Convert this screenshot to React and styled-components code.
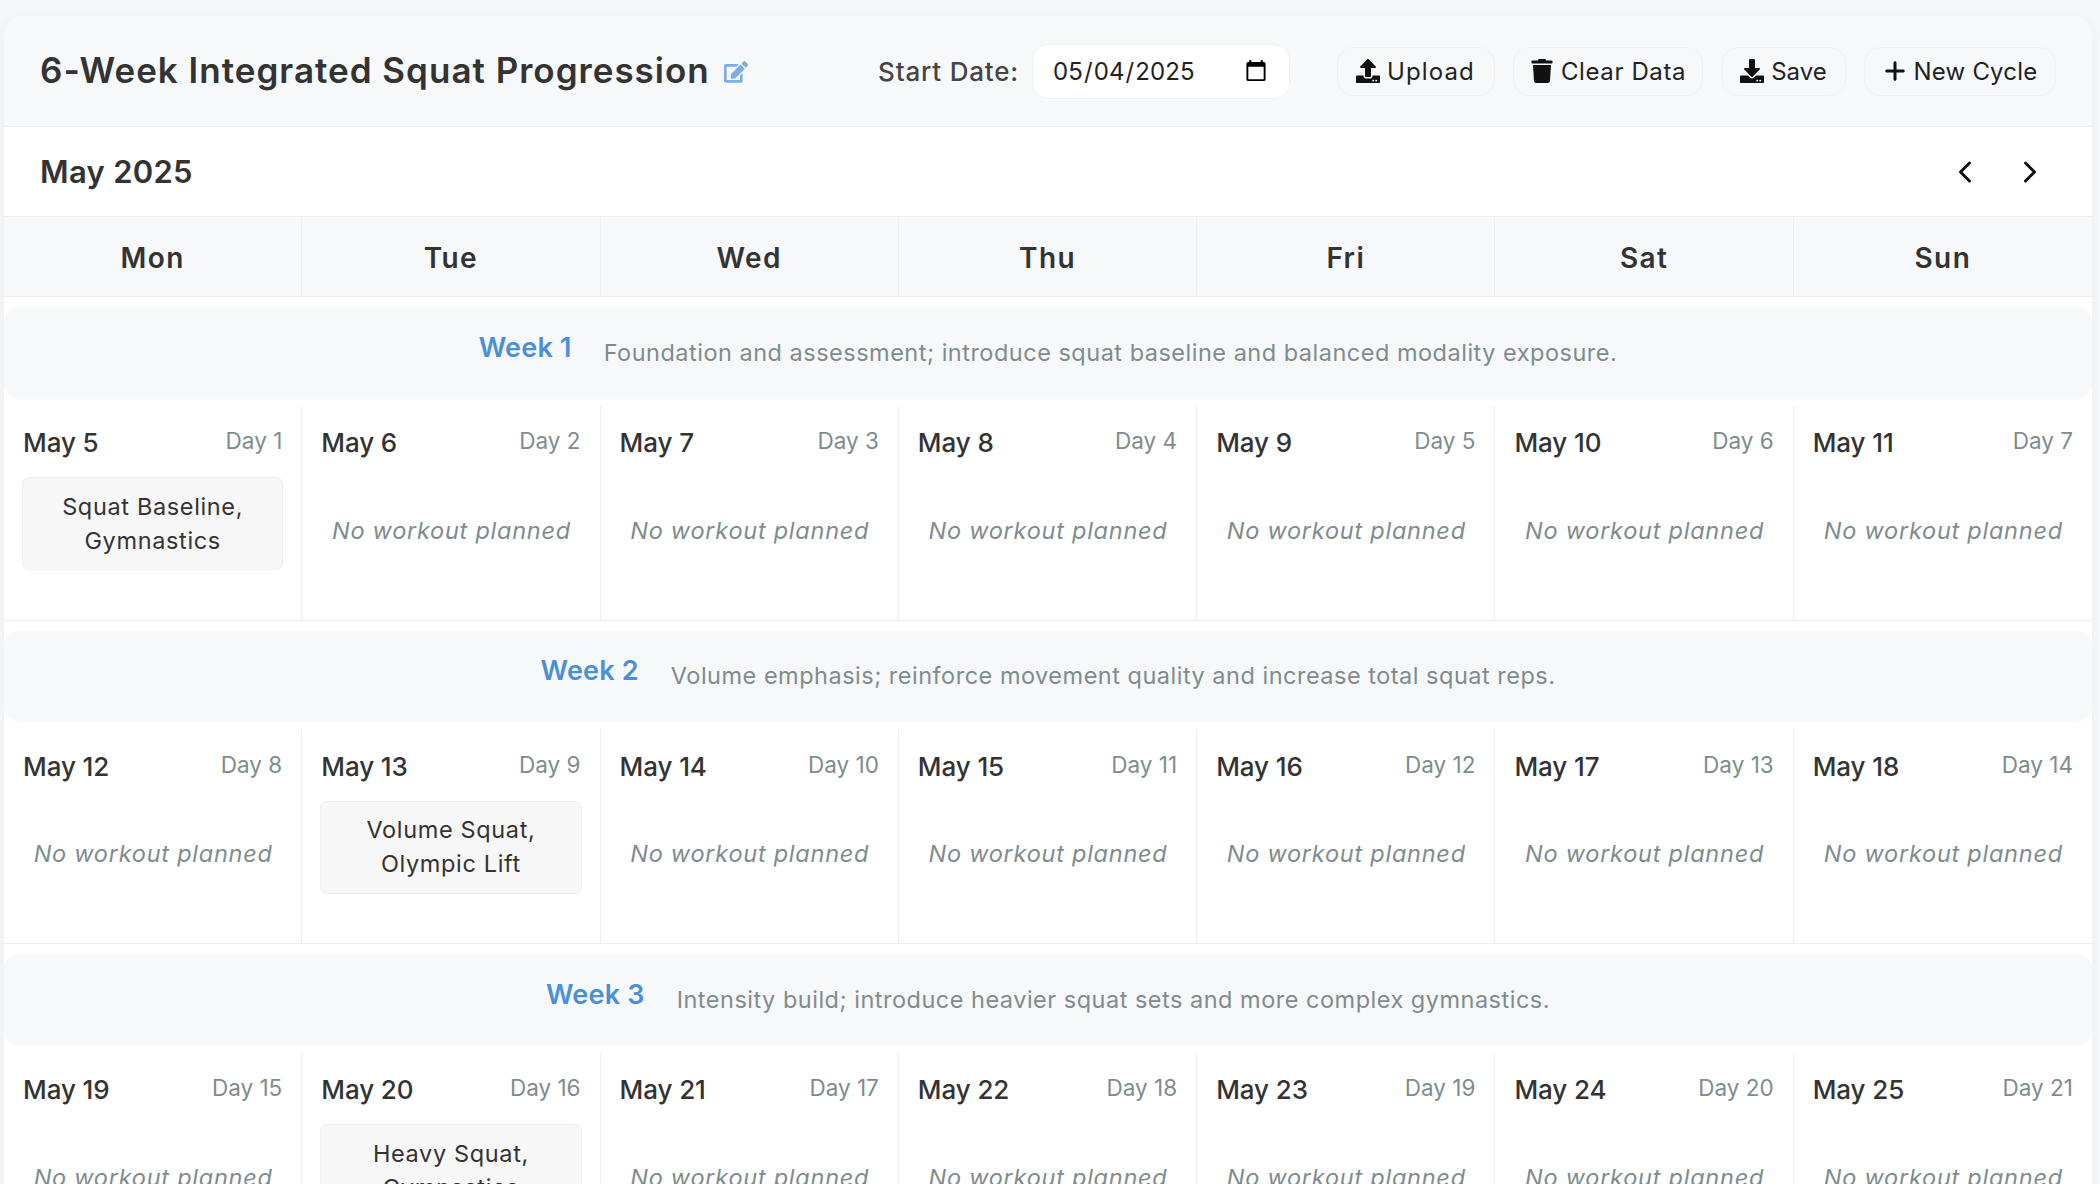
import React from 'react';
import styled, { createGlobalStyle } from 'styled-components';
import { FaEdit, FaUpload, FaTrash, FaDownload } from 'react-icons/fa';
import { FaPlus } from 'react-icons/fa6';
import { ChevronLeft, ChevronRight } from 'lucide-react';

const GlobalStyle = createGlobalStyle`
  html, body {
    margin: 0;
    height: 1184px;
    overflow: hidden;
    background: #f5f6f8;
    font-family: Inter, "Noto Sans", sans-serif;
    color: #333;
  }
  * { box-sizing: border-box; }
`;

const Page = styled.div`
  padding: 16px 8px 0 4px;
`;

const Card = styled.div`
  background: #fff;
  border-radius: 20px 20px 0 0;
  box-shadow: 0 2px 12px rgba(0, 0, 0, 0.04);
  overflow: hidden;
`;

const Header = styled.header`
  height: 111px;
  background: #f7f8fa;
  border-bottom: 1px solid #eceef0;
  display: flex;
  align-items: center;
  justify-content: space-between;
  padding: 0 36px;
`;

const TitleGroup = styled.div`
  display: flex;
  align-items: center;
  gap: 14px;
  margin-bottom: 2px;
`;

const Title = styled.h1`
  margin: 0;
  font-size: 35px;
  font-weight: 600;
  letter-spacing: 1px;
  color: #333;
`;

const EditIcon = styled(FaEdit)`
  width: 24px;
  height: 24px;
  color: #4a90d9;
  opacity: 0.7;
  margin-top: 4px;
`;

const Controls = styled.div`
  display: flex;
  align-items: center;
`;

const DateLabel = styled.label`
  font-size: 26px;
  font-weight: 500;
  letter-spacing: 0.8px;
  color: #444;
  margin-right: 13px;
`;

const DateInput = styled.input`
  width: 258px;
  height: 55px;
  padding: 0 19px;
  background: #fff;
  border: 1px solid #eef0f2;
  border-radius: 16px;
  font-family: inherit;
  font-size: 24px;
  letter-spacing: 0.1px;
  color: #222;
  margin-right: 46.5px;
  outline: none;
`;

const Actions = styled.div`
  display: flex;
  gap: 18.5px;
`;

const ActionButton = styled.button`
  width: ${(props) => props.$width}px;
  height: 49px;
  padding: 0;
  display: flex;
  align-items: center;
  justify-content: center;
  gap: 7px;
  background: #f7f8fa;
  border: 1px solid #eef0f2;
  border-radius: 16px;
  font-family: inherit;
  font-size: 24px;
  letter-spacing: ${(props) => props.$track}px;
  color: #222;
  svg { width: auto; height: 24px; color: #111; }
`;

const MonthBar = styled.div`
  height: 90px;
  border-bottom: 1px solid #eceef0;
  display: flex;
  align-items: center;
  justify-content: space-between;
  padding: 0 36px;
`;

const MonthName = styled.h2`
  margin: 0;
  font-size: 31px;
  font-weight: 600;
  letter-spacing: 0.3px;
  color: #333;
`;

const MonthNav = styled.div`
  display: flex;
  gap: 29px;
  margin-right: 8px;
`;

const NavButton = styled.button`
  width: 36px;
  height: 36px;
  padding: 0;
  background: none;
  border: none;
  color: #111;
  display: flex;
  svg { width: 36px; height: 36px; }
`;

const WeekdayRow = styled.div`
  height: 80px;
  display: grid;
  grid-template-columns: repeat(7, 1fr);
  background: #f7f8fa;
  border-bottom: 1px solid #eceef0;
`;

const Weekday = styled.div`
  display: flex;
  align-items: center;
  justify-content: center;
  padding-top: 2px;
  font-size: 28px;
  font-weight: 600;
  letter-spacing: 1.4px;
  color: #333;
  border-right: 1px solid #eceef0;
  &:last-child { border-right: none; }
`;

const WeekBand = styled.div`
  height: 90.5px;
  margin-top: 10px;
  background: #f7f8fa;
  border-radius: 16px;
  box-shadow: 0 1px 3px rgba(0, 0, 0, 0.03);
  display: flex;
  align-items: center;
  justify-content: center;
  gap: 32px;
`;

const WeekName = styled.span`
  font-size: 27px;
  font-weight: 600;
  letter-spacing: 0.2px;
  color: #4a90d9;
  margin-bottom: 10px;
`;

const WeekText = styled.span`
  font-size: 23.5px;
  letter-spacing: 0.5px;
  color: #7f8c8d;
`;

const DayGrid = styled.div`
  margin-top: 8px;
  display: grid;
  grid-template-columns: repeat(7, 1fr);
  border-bottom: 1px solid #eceef0;
`;

const DayCell = styled.div`
  height: 214px;
  padding: 18.5px 19px 0;
  border-right: 1px solid #eceef0;
  &:last-child { border-right: none; }
`;

const DayHead = styled.div`
  display: flex;
  justify-content: space-between;
  align-items: flex-start;
  height: 53px;
`;

const DateText = styled.span`
  font-size: 26px;
  font-weight: 500;
  letter-spacing: -0.1px;
  color: #333;
  line-height: 38px;
`;

const DayNumber = styled.span`
  font-size: 22.5px;
  color: #7f8c8d;
  line-height: 34px;
`;

const WorkoutBox = styled.div`
  height: 93px;
  margin: 0 -1px;
  background: #f7f7f7;
  border: 1px solid #eeeeee;
  border-radius: 7px;
  display: flex;
  align-items: center;
  justify-content: center;
  text-align: center;
  font-size: 23.5px;
  line-height: 34px;
  letter-spacing: 0.65px;
  color: #333;
`;

const EmptyText = styled.div`
  margin: 36.5px -10px 0;
  padding-left: 1px;
  text-align: center;
  font-size: 23.5px;
  line-height: 34px;
  letter-spacing: 0.75px;
  font-style: italic;
  white-space: nowrap;
  color: #7f8c8d;
`;

const weeks = [
  {
    name: 'Week 1',
    text: 'Foundation and assessment; introduce squat baseline and balanced modality exposure.',
    dates: ['May 5', 'May 6', 'May 7', 'May 8', 'May 9', 'May 10', 'May 11'],
    start: 1,
    workoutAt: 0,
    workout: ['Squat Baseline,', 'Gymnastics'],
  },
  {
    name: 'Week 2',
    text: 'Volume emphasis; reinforce movement quality and increase total squat reps.',
    dates: ['May 12', 'May 13', 'May 14', 'May 15', 'May 16', 'May 17', 'May 18'],
    start: 8,
    workoutAt: 1,
    workout: ['Volume Squat,', 'Olympic Lift'],
  },
  {
    name: 'Week 3',
    text: 'Intensity build; introduce heavier squat sets and more complex gymnastics.',
    dates: ['May 19', 'May 20', 'May 21', 'May 22', 'May 23', 'May 24', 'May 25'],
    start: 15,
    workoutAt: 1,
    workout: ['Heavy Squat,', 'Gymnastics'],
  },
];

const weekdays = ['Mon', 'Tue', 'Wed', 'Thu', 'Fri', 'Sat', 'Sun'];

const App = () => (
  <Page>
    <GlobalStyle />
    <Card>
      <Header>
        <TitleGroup>
          <Title>6-Week Integrated Squat Progression</Title>
          <EditIcon />
        </TitleGroup>
        <Controls>
          <DateLabel>Start Date:</DateLabel>
          <DateInput type="date" defaultValue="2025-05-04" />
          <Actions>
            <ActionButton $width={158} $track={1.1}><FaUpload /> Upload</ActionButton>
            <ActionButton $width={190} $track={0.6}><FaTrash /> Clear Data</ActionButton>
            <ActionButton $width={124} $track={0}><FaDownload /> Save</ActionButton>
            <ActionButton $width={192} $track={0.2}><FaPlus /> New Cycle</ActionButton>
          </Actions>
        </Controls>
      </Header>
      <MonthBar>
        <MonthName>May 2025</MonthName>
        <MonthNav>
          <NavButton><ChevronLeft /></NavButton>
          <NavButton><ChevronRight /></NavButton>
        </MonthNav>
      </MonthBar>
      <WeekdayRow>
        {weekdays.map((d) => <Weekday key={d}>{d}</Weekday>)}
      </WeekdayRow>
      {weeks.map((week) => (
        <React.Fragment key={week.name}>
          <WeekBand>
            <WeekName>{week.name}</WeekName>
            <WeekText>{week.text}</WeekText>
          </WeekBand>
          <DayGrid>
            {week.dates.map((date, i) => (
              <DayCell key={date}>
                <DayHead>
                  <DateText>{date}</DateText>
                  <DayNumber>Day {week.start + i}</DayNumber>
                </DayHead>
                {i === week.workoutAt ? (
                  <WorkoutBox>{week.workout[0]}<br />{week.workout[1]}</WorkoutBox>
                ) : (
                  <EmptyText>No workout planned</EmptyText>
                )}
              </DayCell>
            ))}
          </DayGrid>
        </React.Fragment>
      ))}
    </Card>
  </Page>
);

export default App;
